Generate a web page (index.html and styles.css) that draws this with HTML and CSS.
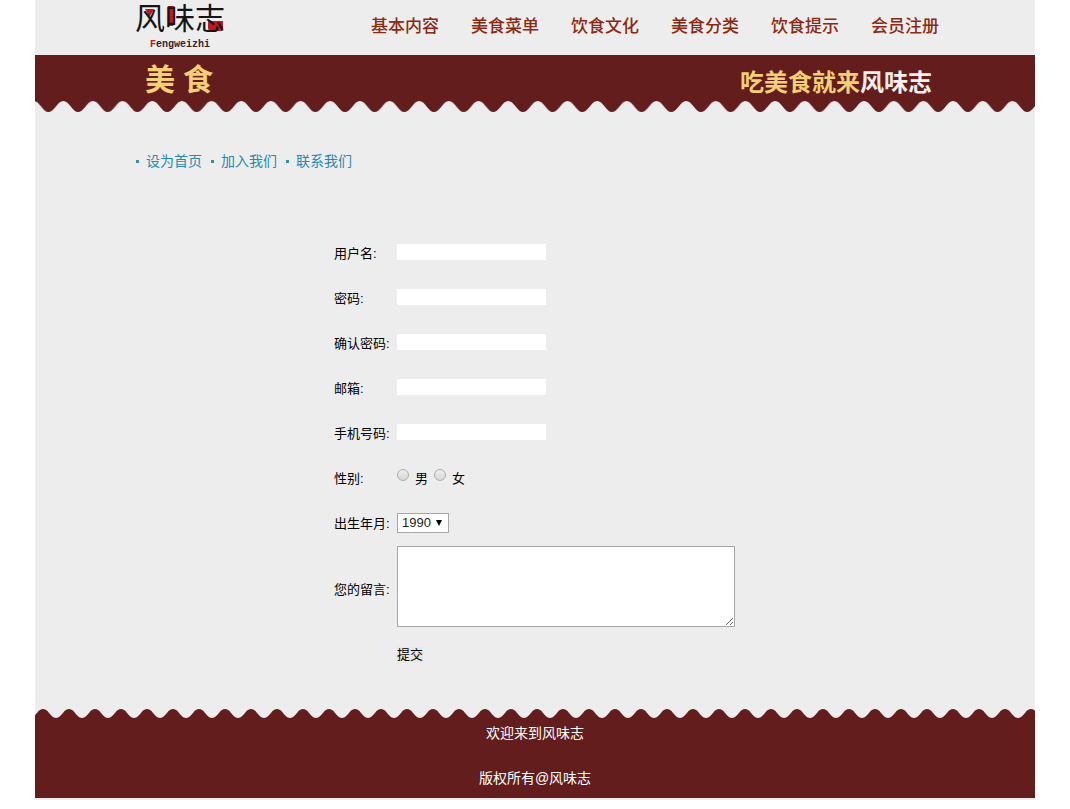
FILE: index.html
```html
<!DOCTYPE html>
<html lang="zh-CN">
<head>
    <meta charset="UTF-8">
    <title>风味志 - 会员注册</title>
    <link rel="stylesheet" href="styles.css">
</head>
<body>
<div class="wrap">
    <header class="header">
        <a class="logo" href="#index">
            <svg width="92" height="50" viewBox="0 0 92 50">
                <path class="red" d="M10 9h9l-4 7h-1zM33 6h6v18q0 2-3 2t-3-2zM73 21h15v7q0 3-4 3h-7q-4 0-4-3z"/>
                <text class="logo-cn" x="0" y="29">风味志</text>
                <text class="logo-en" x="15" y="47"><tspan class="red">F</tspan>engweizhi</text>
            </svg>
        </a>
        <nav class="nav">
            <a href="#base">基本内容</a>
            <a href="#menu">美食菜单</a>
            <a href="#culture">饮食文化</a>
            <a href="#type">美食分类</a>
            <a href="#tips">饮食提示</a>
            <a href="#register">会员注册</a>
        </nav>
    </header>

    <div class="banner">
        <h1 class="title"><span>美</span><span>食</span></h1>
        <p class="slogan">吃美食就来<span>风味志</span></p>
    </div>
    <svg class="wave wave-top" width="100%" height="11">
        <defs>
            <pattern id="waveTop" x="-1.5" width="29.66" height="11" patternUnits="userSpaceOnUse">
                <path d="M0 0C3 0 5 2 8 6C11 9.500 12 11 14.830 11S19 9.500 22 6C25 2 27 0 29.660 0z"/>
            </pattern>
        </defs>
        <rect width="100%" height="11" fill="url(#waveTop)"/>
    </svg>

    <ul class="links">
        <li><a href="#home">设为首页</a></li>
        <li><a href="#join">加入我们</a></li>
        <li><a href="#contact">联系我们</a></li>
    </ul>

    <form class="form" action="#">
        <div class="row">
            <label for="user">用户名:</label>
            <input class="text" type="text" id="user">
        </div>
        <div class="row">
            <label for="pwd">密码:</label>
            <input class="text" type="password" id="pwd">
        </div>
        <div class="row">
            <label for="pwd2">确认密码:</label>
            <input class="text" type="password" id="pwd2">
        </div>
        <div class="row">
            <label for="email">邮箱:</label>
            <input class="text" type="text" id="email">
        </div>
        <div class="row">
            <label for="phone">手机号码:</label>
            <input class="text" type="text" id="phone">
        </div>
        <div class="row" role="radiogroup" aria-labelledby="sex">
            <span class="name" id="sex">性别:</span>
            <label class="radio"><input type="radio" name="sex">男</label>
            <label class="radio"><input type="radio" name="sex">女</label>
        </div>
        <div class="row">
            <label for="year">出生年月:</label>
            <div class="select">
                <select id="year">
                    <option>1990</option>
                    <option>1991</option>
                    <option>1992</option>
                </select>
            </div>
        </div>
        <div class="row">
            <label for="message">您的留言:</label>
            <textarea id="message"></textarea>
        </div>
        <div class="row">
            <span class="name"></span>
            <button type="submit">提交</button>
        </div>
    </form>

    <svg class="wave" width="100%" height="10">
        <defs>
            <pattern id="waveBottom" x="-5" width="26" height="10" patternUnits="userSpaceOnUse">
                <path d="M0 10V9C3 9 5 6 7 4C9 1 11 0 13 0S17 1 19 4C21 6 23 9 26 9V10z"/>
            </pattern>
        </defs>
        <rect width="100%" height="10" fill="url(#waveBottom)"/>
    </svg>
    <footer class="footer">
        <p>欢迎来到风味志</p>
        <p>版权所有@风味志</p>
    </footer>
</div>
</body>
</html>
```

FILE: styles.css
```css
*{
    margin: 0;
    padding: 0;
    box-sizing: border-box;
}
body{
    background-color: #fff;
    font-family: "Liberation Sans", "Noto Sans CJK SC", sans-serif;
    font-size: 13px;
    color: #000;
}
a{
    text-decoration: none;
}
ul{
    list-style: none;
}
.wrap{
    max-width: 1000px;
    margin: 0 auto;
    padding-bottom: 2px;
    background-color: #ededed;
}

/* 头部 */
.header{
    display: flex;
    justify-content: space-between;
    height: 55px;
    padding: 0 96px 0 100px;
}
.logo svg{
    display: block;
}
.logo-cn{
    font-size: 30px;
    fill: #151515;
}
.logo-en{
    font-family: "Liberation Mono", monospace;
    font-size: 10px;
    font-weight: bold;
    fill: #33242a;
}
.red{
    fill: #c01722;
}
.nav{
    display: flex;
    gap: 32px;
    line-height: 53px;
    font-size: 17px;
    font-weight: 500;
}
.nav a{
    color: #8b2a12;
}

.banner{
    display: flex;
    justify-content: space-between;
    height: 46px;
    padding: 0 103px 0 110px;
    background-color: #621d1c;
}
.title{
    display: flex;
    gap: 8px;
    line-height: 50px;
    font-size: 30px;
    font-weight: bold;
    color: #f3cf75;
}
.slogan{
    line-height: 56px;
    font-size: 24px;
    font-weight: bold;
    color: #f3cf75;
}
.slogan span{
    color: #f8eeee;
}
.wave{
    display: block;
    fill: #621d1c;
}

.links{
    display: flex;
    gap: 8px;
    margin-top: 34px;
    padding-left: 100px;
    line-height: 30px;
    font-size: 14px;
    color: #2789b0;
}
.links li{
    display: flex;
    align-items: center;
}
.links li::before{
    content: "";
    width: 3px;
    height: 3px;
    margin: 0 7px 0 1px;
    background-color: #3b8f9d;
}
.links a{
    color: #2789b0;
}

/* 注册表单 */
.form{
    margin: 54px 0 32px;
    padding-left: 299px;
}
.row{
    display: flex;
    align-items: center;
    min-height: 45px;
}
.row > label:first-child,
.name{
    width: 63px;
}
.text{
    width: 149px;
    height: 16px;
    margin-bottom: 2px;
    border: none;
    background-color: #fff;
}
.row .radio{
    display: flex;
    align-items: center;
    gap: 6px;
    margin-right: 6px;
}
.radio input{
    appearance: none;
    width: 12px;
    height: 12px;
    margin-bottom: 5px;
    border: 1px solid #adadad;
    border-radius: 50%;
    background: linear-gradient(#eee, #d8d8d8);
}
.radio input:checked{
    background: #555;
}
.select{
    position: relative;
}
.select::after{
    content: "";
    position: absolute;
    top: 7px;
    right: 7px;
    border: 3px solid transparent;
    border-top: 6px solid #000;
    border-bottom: none;
    pointer-events: none;
}
select{
    display: block;
    appearance: none;
    width: 52px;
    height: 20px;
    padding-left: 4px;
    border: 1px solid #a6a6a6;
    background-color: #fff;
    font: 13px "Liberation Sans", sans-serif;
    color: #222;
}
textarea{
    display: block;
    width: 338px;
    height: 81px;
    margin: 1px 0 5px;
    border: 1px solid #a6a6a6;
    background-color: #fff;
    resize: both;
}
button{
    border: none;
    background-color: #e8e8e8;
    font: inherit;
    line-height: 16px;
}

/* 底部 */
.footer{
    display: flex;
    flex-direction: column;
    gap: 16px;
    padding-bottom: 5px;
    background-color: #621d1c;
    line-height: 29px;
    font-size: 14px;
    text-align: center;
    color: #fff;
}
```
